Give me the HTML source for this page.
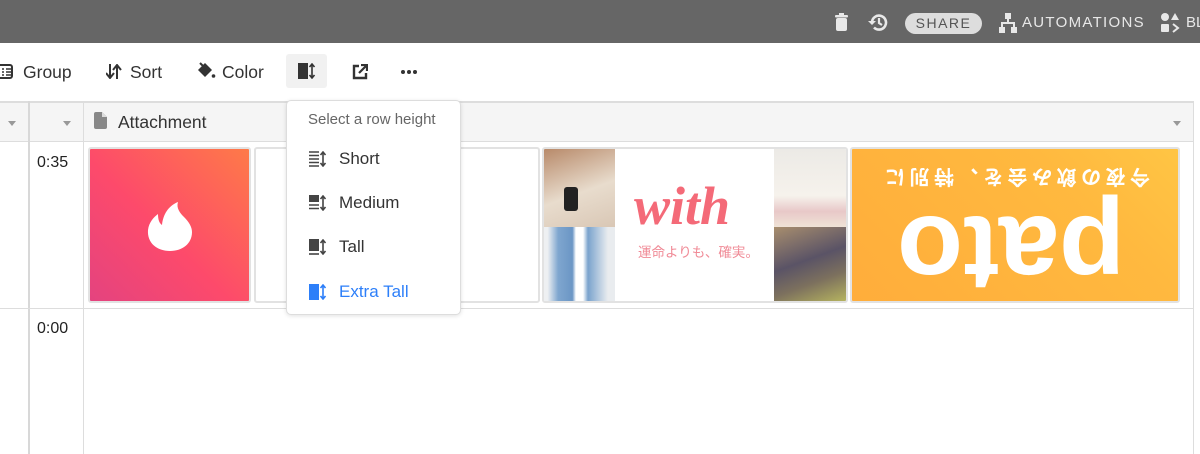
<!DOCTYPE html>
<html><head><meta charset="utf-8"><style>
*{margin:0;padding:0;box-sizing:border-box}
body{width:1200px;height:454px;overflow:hidden;background:#fff;font-family:"Liberation Sans","Noto Sans CJK JP",sans-serif;position:relative;color:#333}
.a{position:absolute}
.top{left:0;top:0;width:1200px;height:43px;background:#666}
.tb{font-size:17.5px;color:#333;top:62px}
.hd{left:0;top:101px;width:1194px;height:41px;background:#f5f5f5;border-top:2px solid #ddd;border-bottom:1px solid #ddd}
.vl{width:1px;background:#ddd}
.tri{width:0;height:0;border-left:4px solid transparent;border-right:4px solid transparent;border-top:5px solid #999}
.tile{border:2px solid #e2e2e2;border-radius:3px;overflow:hidden}
.menu{left:286px;top:100px;width:175px;height:215px;background:#fff;border:1px solid #ddd;border-radius:5px;box-shadow:0 1px 4px rgba(0,0,0,.12)}
.mi{position:absolute;left:22px;font-size:17px;color:#333;display:flex;align-items:center}
.mi svg{margin-right:12px}
</style></head><body>
<div class="a top"></div>
<svg class="a" style="left:835px;top:13px" width="13" height="18" viewBox="0 0 13 18"><rect x="0" y="2" width="13" height="2.5" rx="1" fill="#e8e8e8"/><rect x="4" y="0" width="5" height="2" fill="#e8e8e8"/><rect x="1" y="5" width="11" height="13" rx="2" fill="#e8e8e8"/></svg>
<svg class="a" style="left:868px;top:13px" width="20" height="19" viewBox="0 0 20 19"><path d="M4 9.5a7 7 0 1 1 2 5" fill="none" stroke="#e8e8e8" stroke-width="2.6"/><path d="M0 8h8l-4 4z" fill="#e8e8e8"/><path d="M11 5v5l3 2" fill="none" stroke="#e8e8e8" stroke-width="2.2"/></svg>
<div class="a" style="left:905px;top:13px;width:77px;height:21px;border-radius:11px;background:#ddd;color:#555;font-size:14px;letter-spacing:1.5px;text-align:center;line-height:21px">SHARE</div>
<svg class="a" style="left:999px;top:13px" width="18" height="20" viewBox="0 0 18 20"><rect x="6" y="0" width="6" height="6" fill="#e8e8e8"/><rect x="0" y="14" width="6" height="6" fill="#e8e8e8"/><rect x="12" y="14" width="6" height="6" fill="#e8e8e8"/><path d="M9 6v4M3 14v-4h12v4" fill="none" stroke="#e8e8e8" stroke-width="2"/></svg>
<div class="a" style="left:1022px;top:14px;color:#e8e8e8;font-size:15px;letter-spacing:1.3px">AUTOMATIONS</div>
<svg class="a" style="left:1161px;top:13px" width="20" height="20" viewBox="0 0 20 20"><circle cx="4" cy="4" r="4" fill="#e8e8e8"/><path d="M14 0l4 7h-8z" fill="#e8e8e8"/><rect x="0" y="11" width="8" height="8" rx="1" fill="#e8e8e8"/><path d="M12 11l5 4-5 4" fill="none" stroke="#e8e8e8" stroke-width="2"/></svg>
<div class="a" style="left:1186px;top:14px;color:#e8e8e8;font-size:15px">BL</div>
<svg class="a" style="left:0;top:64px" width="13" height="15" viewBox="0 0 13 15"><rect x="-3" y="1" width="15" height="13" rx="2" fill="none" stroke="#333" stroke-width="2"/><path d="M2 5h2M6 5h5M2 8h2M6 8h5M2 11h2M6 11h5" stroke="#333" stroke-width="1.6"/></svg>
<div class="a tb" style="left:23px">Group</div>
<svg class="a" style="left:106px;top:64px" width="16" height="15" viewBox="0 0 16 15"><path d="M4 0v13M0 9l4 5 4-5M11 15V2M7 6l4-5 4 5" fill="none" stroke="#333" stroke-width="2"/></svg>
<div class="a tb" style="left:130px">Sort</div>
<svg class="a" style="left:196px;top:62px" width="20" height="18" viewBox="0 0 20 18"><path d="M2 8l7-7 7 7-7 7z" fill="#333"/><path d="M4 1l4 4" stroke="#333" stroke-width="2"/><circle cx="17.5" cy="14" r="1.8" fill="#333"/></svg>
<div class="a tb" style="left:222px">Color</div>
<div class="a" style="left:286px;top:54px;width:41px;height:34px;background:#f1f1f1;border-radius:3px"></div>
<svg class="a" style="left:298px;top:63px" width="18" height="16" viewBox="0 0 18 16"><rect x="0" y="0" width="10" height="16" fill="#333"/><path d="M14 1v14M11.5 4l2.5-3 2.5 3M11.5 12l2.5 3 2.5-3" fill="none" stroke="#333" stroke-width="1.6"/></svg>
<svg class="a" style="left:352px;top:64px" width="16" height="16" viewBox="0 0 16 16"><path d="M7 2H2v12h12V9" fill="none" stroke="#333" stroke-width="2.4"/><path d="M7 9l7-7M9 1h6v6" fill="none" stroke="#333" stroke-width="2.2"/></svg>
<div class="a" style="left:401px;top:70px;width:4px;height:4px;border-radius:2px;background:#333;box-shadow:6px 0 #333,12px 0 #333"></div>
<div class="a hd"></div>
<div class="a vl" style="left:28px;top:101px;height:353px;background:#d8d8d8;width:2px"></div>
<div class="a vl" style="left:83px;top:101px;height:353px"></div>
<div class="a vl" style="left:1193px;top:101px;height:353px"></div>
<div class="a tri" style="left:8px;top:121px"></div>
<div class="a tri" style="left:63px;top:121px"></div>
<svg class="a" style="left:94px;top:112px" width="13" height="17" viewBox="0 0 13 17"><path d="M2 0h6l5 5v10a2 2 0 0 1-2 2H2a2 2 0 0 1-2-2V2a2 2 0 0 1 2-2z" fill="#888"/><path d="M8 0v5h5" fill="#ddd"/></svg>
<div class="a" style="left:118px;top:112px;font-size:17.5px;color:#333">Attachment</div>
<div class="a tri" style="left:1173px;top:121px"></div>
<div class="a" style="left:0;top:308px;width:1194px;height:1px;background:#ddd"></div>
<div class="a" style="left:37px;top:154px;font-size:16px;color:#222">0:35</div>
<div class="a" style="left:37px;top:320px;font-size:16px;color:#222">0:00</div>
<div class="a tile" style="left:88px;top:147px;width:163px;height:156px;background:linear-gradient(45deg,#e4437f 0%,#fd4a6b 45%,#fe7a48 100%)">
<svg style="position:absolute;left:57px;top:52px" width="46" height="52" viewBox="0 0 46 52"><path d="M23 50C10 50 0 42 1 29c1-8 6-13 10-16 0 5 1 9 4 11 1-10 6-19 16-23-2 6 2 11 6 15 5 5 8 10 8 15 0 12-10 19-22 19z" fill="#fff"/></svg>
</div>
<div class="a tile" style="left:254px;top:147px;width:286px;height:156px;background:#fff"></div>
<div class="a tile" style="left:542px;top:147px;width:306px;height:156px;background:#fff">
<div class="a" style="left:0;top:0;width:71px;height:78px;background:linear-gradient(160deg,#b88a6a,#e8dccd 55%,#d9c7b5)"></div>
<div class="a" style="left:20px;top:38px;width:14px;height:24px;background:#222;border-radius:3px"></div>
<div class="a" style="left:0;top:78px;width:71px;height:74px;background:linear-gradient(90deg,#eef0f2 5%,#7fa6cf 20%,#6b96c5 40%,#fff 45%,#fff 55%,#7aa3cd 62%,#e9ecef 90%)"></div>
<div class="a" style="left:230px;top:0;width:72px;height:78px;background:linear-gradient(180deg,#eceae6,#f6f2ec 60%,#e8c8c8 80%,#efe3d6)"></div>
<div class="a" style="left:230px;top:78px;width:72px;height:74px;background:linear-gradient(160deg,#a88e6e,#5a5366 45%,#7c705e 70%,#b5b35f)"></div>
<div class="a" style="left:90px;top:30px;font-family:'Liberation Serif',serif;font-style:italic;font-weight:bold;font-size:54px;color:#f46a78;line-height:1">with</div>
<div class="a" style="left:94px;top:92px;font-size:13.5px;color:#f08a96">運命よりも、確実。</div>
</div>
<div class="a tile" style="left:850px;top:147px;width:330px;height:156px;background:linear-gradient(45deg,#ffad3b,#ffb93f 70%,#ffc544)">
<div class="a" style="left:0;top:0;width:326px;height:152px;transform:rotate(180deg)">
<div class="a" style="left:28px;top:115px;font-size:20px;color:#fff;letter-spacing:4.5px;font-weight:bold;white-space:nowrap;line-height:1">今夜の飲み会を、特別に</div>
<div class="a" style="left:53px;top:-7px;font-size:108px;color:#fff;font-weight:bold;line-height:1">pato</div>
</div>
</div>
<div class="a menu">
<div class="a" style="left:21px;top:10px;font-size:15px;color:#666">Select a row height</div>
<div class="mi" style="top:48px"><svg width="18" height="16" viewBox="0 0 18 16"><path d="M0 1h10M0 4.5h10M0 8h10M0 11.5h10M0 15h10" stroke="#444" stroke-width="1.6"/><path d="M14 1v14M11.5 4l2.5-3 2.5 3M11.5 12l2.5 3 2.5-3" fill="none" stroke="#444" stroke-width="1.6"/></svg>Short</div>
<div class="mi" style="top:92px"><svg width="18" height="16" viewBox="0 0 18 16"><rect x="0" y="0" width="10" height="7" fill="#444"/><path d="M0 10h10M0 13.5h10" stroke="#444" stroke-width="1.6"/><path d="M14 1v14M11.5 4l2.5-3 2.5 3M11.5 12l2.5 3 2.5-3" fill="none" stroke="#444" stroke-width="1.6"/></svg>Medium</div>
<div class="mi" style="top:136px"><svg width="18" height="16" viewBox="0 0 18 16"><rect x="0" y="0" width="10" height="12" fill="#444"/><path d="M0 15h10" stroke="#444" stroke-width="1.6"/><path d="M14 1v14M11.5 4l2.5-3 2.5 3M11.5 12l2.5 3 2.5-3" fill="none" stroke="#444" stroke-width="1.6"/></svg>Tall</div>
<div class="mi" style="top:181px;color:#2d7ff9"><svg width="18" height="16" viewBox="0 0 18 16"><rect x="0" y="0" width="10" height="16" fill="#2d7ff9"/><path d="M14 1v14M11.5 4l2.5-3 2.5 3M11.5 12l2.5 3 2.5-3" fill="none" stroke="#2d7ff9" stroke-width="1.6"/></svg>Extra Tall</div>
</div>
</body></html>
